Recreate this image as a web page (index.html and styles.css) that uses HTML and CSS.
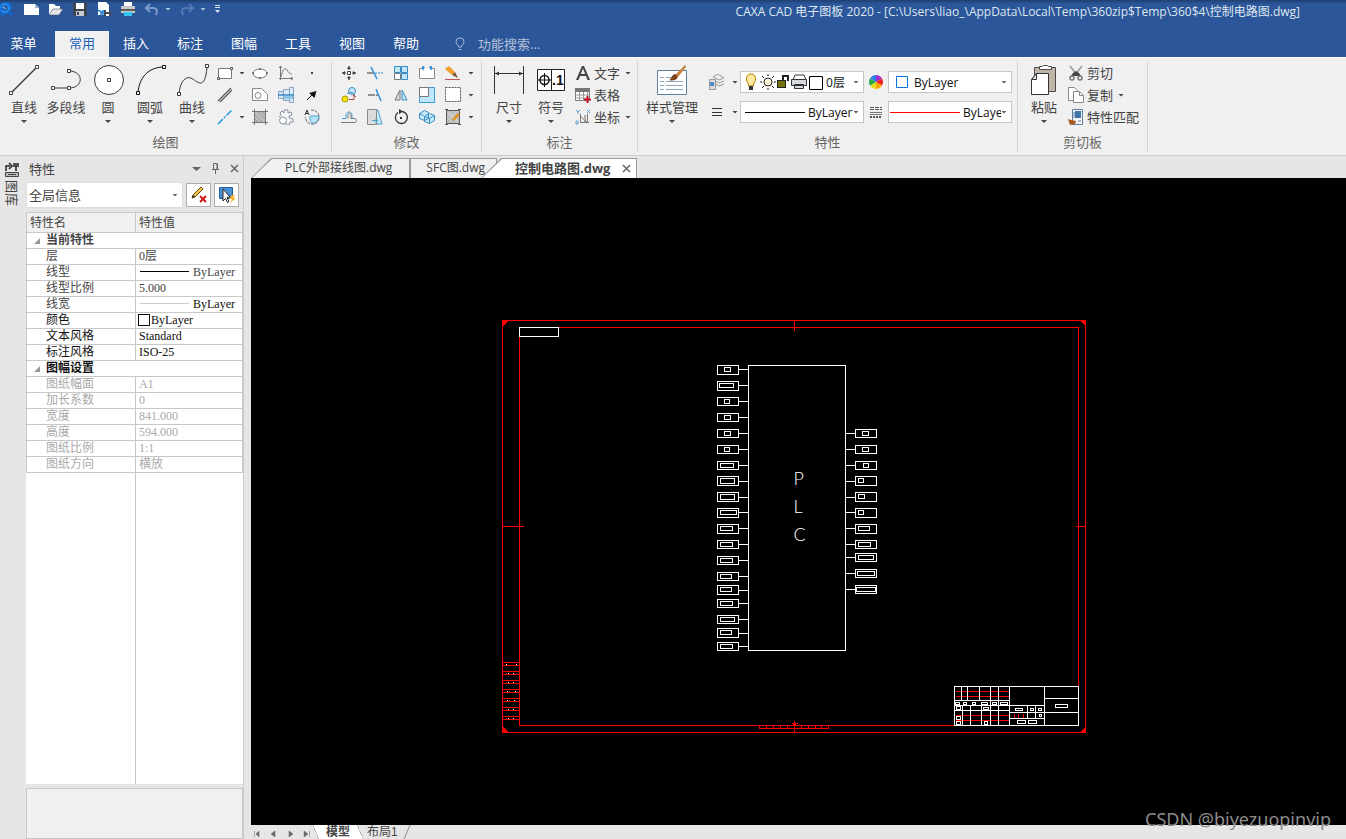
FILE: index.html
```html
<!DOCTYPE html>
<html lang="zh-CN">
<head>
    <meta charset="UTF-8">
    <meta name="viewport" content="width=device-width, initial-scale=1.0">
    <title>CAXA CAD 电子图板 2020</title>
    <link rel="stylesheet" href="styles.css">
</head>
<body>
    <header class="header">
        <div class="titlebar">
            <div class="quick">
                <svg class="logo" width="14" height="18" viewBox="0 0 14 18"><circle cx="5" cy="8" r="4" fill="none" stroke="#1e8bf0" stroke-width="2.500"/><path d="M-2 4l4 2M1 13l-3 2M8 11l4 4M7 3l4 2M-1 9h4M2 15l3-2M10 8h2" stroke="#0d6ee0" stroke-width="2" fill="none"/><path d="M3 7l3 2" stroke="#9fd4ff"/></svg>
                <button title="新建"><svg width="16" height="16" viewBox="0 0 16 16"><path d="M0 3h11l4 4v7H0z" fill="#fff"/><path d="M11 3v4h4z" fill="#9fb0c8"/></svg></button>
                <button title="打开"><svg width="16" height="16" viewBox="0 0 16 16"><path d="M1 3h5l2 2h4v3H5l-4 6z" fill="#fff"/><path d="M5 8h10l-4 6H1z" fill="#e6e6e6" stroke="#4a5c7a" stroke-width=".6"/></svg></button>
                <button title="保存"><svg width="16" height="16" viewBox="0 0 16 16"><path d="M1 2h14v13H3l-2-2z" fill="#3d4450"/><path d="M4 2h8v6H4z" fill="#fff"/><path d="M4 10h8v5H4z" fill="#c8ccd2"/><path d="M5 11h2v3H5z" fill="#3d4450"/></svg></button>
                <button title="另存为"><svg width="16" height="16" viewBox="0 0 16 16"><path d="M2 1h8l3 3v10H2z" fill="#fff"/><path d="M2 9l5 3M7 9v4H4" stroke="#1f7fd6" stroke-width="1.500" fill="none"/><path d="M8 9h7v6H8z" fill="#444b57"/><path d="M10 9h3v2h-3zM10 13h3v2h-3z" fill="#fff"/></svg></button>
                <button title="打印"><svg width="16" height="16" viewBox="0 0 16 16"><path d="M4 1h8v4H4z" fill="#fff"/><path d="M1 5h14v7H1z" fill="#c8c8c8"/><path d="M1 8h14v2H1z" fill="#5b5b5b"/><path d="M4 11h8v4H4z" fill="#33c5f0"/></svg></button>
                <button title="撤销"><svg width="16" height="16" viewBox="0 0 16 16"><path d="M2 7h7c4 0 5 3 3 7M6 3L2 7l4 4" stroke="#7f9cc8" stroke-width="2" fill="none"/></svg></button>
                <i class="caret pale"></i>
                <button title="恢复"><svg width="16" height="16" viewBox="0 0 16 16"><path d="M14 7H7c-4 0-5 3-3 7M10 3l4 4-4 4" stroke="#5478b4" stroke-width="2" fill="none"/></svg></button>
                <i class="caret pale"></i>
                <button title="自定义" class="more"><svg width="7" height="8" viewBox="0 0 7 8"><path d="M1 .5h5M1 2.500h5" stroke="#dde5f2"/><path d="M1 5h5L3.500 8z" fill="#dde5f2"/></svg></button>
            </div>
            <h1 class="title">CAXA CAD 电子图板 2020 - [C:\Users\liao_\AppData\Local\Temp\360zip$Temp\360$4\控制电路图.dwg]</h1>
        </div>
        <nav class="menu">
            <a href="#" class="first">菜单</a>
            <a href="#" class="active">常用</a>
            <a href="#">插入</a>
            <a href="#">标注</a>
            <a href="#">图幅</a>
            <a href="#">工具</a>
            <a href="#">视图</a>
            <a href="#">帮助</a>
            <label class="search">
                <svg width="12" height="14" viewBox="0 0 12 14"><path d="M4.500 10V9C3 7.500 2 6.500 2 4.800a4 4 0 018 0C10 6.500 9 7.500 7.500 9v1zM4.500 12.500h3" fill="none" stroke="#a9b9d5"/></svg>
                <input type="text" placeholder="功能搜索..." aria-label="功能搜索">
            </label>
        </nav>
    </header>

    <div class="ribbon">
        <section class="group draw">
            <div class="tools">
                <button class="big"><svg width="38" height="36" viewBox="0 0 38 36"><path d="M6 30L32 4" stroke="#3a3a42" stroke-width="1.500"/><g fill="#fff" stroke="#3a3a42"><path d="M4.500 28.500h3v3h-3zM30.500 2.500h3v3h-3z"/></g></svg><span>直线</span><i class="caret"></i></button>
                <button class="big"><svg width="38" height="36" viewBox="0 0 38 36"><path d="M6 25h16c15 0 15-17 0-17" stroke="#3a3a42" fill="none"/><g fill="#fff" stroke="#3a3a42"><path d="M4.500 23.500h3v3h-3zM20.500 23.500h3v3h-3zM20.500 6.500h3v3h-3z"/></g></svg><span>多段线</span></button>
                <button class="big"><svg width="38" height="36" viewBox="0 0 38 36"><circle cx="20" cy="17" r="14.500" fill="#fff" stroke="#3a3a42"/><path d="M18.500 15.500h3v3h-3z" fill="#fff" stroke="#3a3a42"/></svg><span>圆</span><i class="caret"></i></button>
                <button class="big"><svg width="38" height="36" viewBox="0 0 38 36"><path d="M7 30C8 15 17 4 33 4" stroke="#111" fill="none"/><g fill="#fff" stroke="#111"><path d="M5.500 28.500h3v3h-3zM31.500 2.500h3v3h-3z"/></g></svg><span>圆弧</span><i class="caret"></i></button>
                <button class="big"><svg width="38" height="36" viewBox="0 0 38 36"><path d="M6 31c1-12 6-18 12-16 6 3 14 14 16-11" stroke="#3a3a42" fill="none"/><g fill="#fff" stroke="#3a3a42"><path d="M4.500 29.500h3v3h-3zM32.500 1.500h3v3h-3z"/></g></svg><span>曲线</span><i class="caret"></i></button>
                <div class="grid">
                    <button title="矩形"><svg width="18" height="16" viewBox="0 0 18 16"><path d="M2.500 3.500h13v10h-13z" fill="#fff" stroke="#777"/><path d="M14.500 2.500h2v2h-2zM1.500 12.500h2v2h-2z" fill="#fff" stroke="#555"/></svg></button><i class="caret"></i>
                    <button title="椭圆"><svg width="16" height="16" viewBox="0 0 16 16"><ellipse cx="8" cy="8.500" rx="7" ry="4.500" fill="#fff" stroke="#777"/><path d="M7 3h2v2H7zM0 7h2v2H0zM14 7h2v2h-2zM7 12h2v2H7z" fill="#777"/></svg></button>
                    <button title="公式曲线"><svg width="16" height="16" viewBox="0 0 16 16"><path d="M2.500 1v14M1 13.500h14M1 3l1.500-2L4 3M13 12l2 1.500-2 1.500M3 12C5 2 8 3 9 5s3 4 5 4" fill="none" stroke="#777"/></svg></button>
                    <button title="点"><svg width="16" height="16" viewBox="0 0 16 16"><path d="M7 7h2v2H7z" fill="#444"/></svg></button>
                    <button title="平行线"><svg width="16" height="16" viewBox="0 0 16 16"><path d="M1 14L14 1M3 15L15 3" stroke="#555" stroke-width="1.200"/></svg></button><i></i>
                    <button title="多边形"><svg width="16" height="16" viewBox="0 0 16 16"><path d="M.5 1.500h9l6 6v6H.5z" fill="#fff" stroke="#888"/><circle cx="6" cy="8.500" r="3" fill="#fff" stroke="#888"/></svg></button>
                    <button title="轴"><svg width="16" height="16" viewBox="0 0 16 16"><path d="M.5 4.500h5v7h-5z" fill="#d5e6f5" stroke="#8aa2bc"/><path d="M5.500 2.500h6v11h-6zM11.500.5h4v15h-4z" fill="#d9eafa" stroke="#8aa2bc"/><path d="M0 8h16" stroke="#3a8cc8" stroke-width="1.500"/><path d="M6 10.500h9" stroke="#8fc6ee" stroke-width="3"/></svg></button>
                    <button title="箭头"><svg width="16" height="16" viewBox="0 0 16 16"><path d="M3 13l5-5" stroke="#111"/><path d="M12.500 4l-2 7L5 6z" fill="#111"/></svg></button>
                    <button title="中心线"><svg width="16" height="16" viewBox="0 0 16 16"><path d="M1 15L15 1" stroke="#1e9be0" stroke-width="1.500" stroke-dasharray="7 1.500 2 1.500"/></svg></button><i class="caret"></i>
                    <button title="剖面线"><svg width="16" height="16" viewBox="0 0 16 16"><path d="M2.500 2.500h11v11h-11z" fill="#bdbdbd"/><path d="M2.500 0v16M13.500 0v16M0 2.500h16M0 13.500h16" stroke="#777"/><path d="M3 6l7 7M3 10l3 3M6 3l7 7M10 3l3 3" stroke="#999"/></svg></button>
                    <button title="齿轮"><svg width="16" height="16" viewBox="0 0 16 16"><path d="M2 4l2-2 2 2V1h4v3l3-1 1 3-3 1v2l4 1v3h-3l-1 3H8v-2M2 4l1 2-2 2" fill="#f4f6f9" stroke="#8792a0"/><circle cx="5" cy="11.500" r="3.500" fill="#fff" stroke="#8792a0"/></svg></button>
                    <button title="局部放大"><svg width="16" height="16" viewBox="0 0 16 16"><path d="M6 7h9c0 8-9 10-9 3z" fill="#b8e2f8" stroke="#4aa3d6"/><path d="M7 1c4 0 7 2 8 6M15 9c-1 6-7 8-12 4L1 8" fill="none" stroke="#666" stroke-dasharray="3 1"/><path d="M1 6l2-5 2 5M2 4.500h2" fill="none" stroke="#333"/></svg></button>
                </div>
            </div>
            <h2>绘图</h2>
        </section>

        <section class="group modify">
            <div class="tools">
                <div class="grid">
                    <button title="平移"><svg width="16" height="16" viewBox="0 0 16 16"><path d="M8 1v4M8 11v4M1 8h4M11 8h4" stroke="#444"/><path d="M6 4l2-3 2 3zM6 12l2 3 2-3zM4 6L1 8l3 2zM12 6l3 2-3 2z" fill="#444"/><path d="M6.500 6.500h3v3h-3z" fill="#fff" stroke="#444"/></svg></button>
                    <button title="裁剪"><svg width="16" height="16" viewBox="0 0 16 16"><path d="M0 8h7" stroke="#333"/><path d="M8 8h8" stroke="#2f8fd8" stroke-dasharray="2 1"/><path d="M4 2l6 12" stroke="#2f8fd8" stroke-width="1.500"/></svg></button>
                    <button title="阵列"><svg width="16" height="16" viewBox="0 0 16 16"><path d="M1.500 1.500h6v6h-6zM8.500 1.500h6v6h-6zM8.500 8.500h6v6h-6z" fill="#bfe6f9" stroke="#3a8cc0"/><path d="M1.500 8.500h6v6h-6z" fill="#fff" stroke="#777"/></svg></button>
                    <button title="过渡"><svg width="18" height="16" viewBox="0 0 18 16"><path d="M1.500 3.500h15v10h-15z" fill="#fff" stroke="#888"/><path d="M6 3.500h6" stroke="#f0f0f0"/><path d="M4 3l2.500-1M14 3l-2.500-1M5 1v4M13 1v4" stroke="#2f8fd8" stroke-width="1.500"/></svg></button>
                    <button title="删除"><svg width="16" height="16" viewBox="0 0 16 16"><path d="M0 4l4-3 6 6-3 3z" fill="#f0a02c"/><path d="M7 10l3-3 3 6z" fill="#7d5230"/><path d="M0 14.500h15" stroke="#b55"/></svg></button><i class="caret"></i>
                    <button title="平移复制"><svg width="16" height="16" viewBox="0 0 16 16"><circle cx="4" cy="12" r="3" fill="#f7e600" stroke="#a89a00"/><circle cx="11" cy="4" r="3.500" fill="#c6e9fb" stroke="#3a8cc0"/><path d="M6 7l3-2 5 2" stroke="#3a8cc0" fill="none"/><path d="M8 12.500h5V9M12 9l1-1 2 2" stroke="#b04040" fill="none"/></svg></button>
                    <button title="延伸"><svg width="16" height="16" viewBox="0 0 16 16"><path d="M1 8h5" stroke="#333"/><path d="M6 8h6" stroke="#333" stroke-dasharray="2 1"/><path d="M9 2l5 12" stroke="#2f8fd8" stroke-width="1.500"/></svg></button>
                    <button title="镜像"><svg width="16" height="16" viewBox="0 0 16 16"><path d="M7 3v10H2z" fill="#ddd" stroke="#777"/><path d="M9 3v10h5z" fill="#bfe6f9" stroke="#3a8cc0"/></svg></button>
                    <button title="缩放"><svg width="16" height="16" viewBox="0 0 16 16"><path d="M.5.5h15v15H.5z" fill="#bfe6f9" stroke="#3a9ad0"/><path d="M.5.5h9v9h-9z" fill="#fff" stroke="#777"/></svg></button>
                    <button title="分解"><svg width="16" height="16" viewBox="0 0 16 16"><path d="M.5.5h15v14H.5z" fill="#fff" stroke="#555" stroke-dasharray="2 1"/></svg></button><i class="caret"></i>
                    <button title="等距线"><svg width="16" height="16" viewBox="0 0 16 16"><path d="M1 9.500h4V6c0-4 6-4 6 0v3.500" fill="none" stroke="#4a9ad0"/><path d="M0 13.500h14c2 0 2-4 0-4h-4V6c0-2-3-2-3 0v3.500" fill="none" stroke="#777"/></svg></button>
                    <button title="拉伸"><svg width="16" height="16" viewBox="0 0 16 16"><path d="M9 1h2l4 14H9z" fill="#c6ecfb" stroke="#4aa3d6"/><path d="M.5.5h9v15h-9z" fill="#dcdcdc" stroke="#888"/><path d="M5 11.500h5M8 9.500l3 2-3 2" stroke="#4aa3d6" fill="none"/></svg></button>
                    <button title="旋转"><svg width="16" height="16" viewBox="0 0 16 16"><path d="M9 2.500a6 6 0 11-4 1" fill="none" stroke="#333" stroke-width="1.300"/><path d="M6 0l4 2.500L6 5z" fill="#333"/><path d="M7 8h2v2H7z" fill="#333"/></svg></button>
                    <button title="块创建"><svg width="16" height="16" viewBox="0 0 16 16"><path d="M.5 4.500l5-3 4 2v6l-4 2-5-2zM5.500 7.500l5-3 5 2v5l-5 3-5-2z" fill="#c6e9fb" stroke="#3a8cc0"/><path d="M5.500 7.500l5 2 5-3M10.500 9.500v5M.5 4.500l4 2" fill="none" stroke="#3a8cc0"/></svg></button>
                    <button title="编辑填充"><svg width="16" height="16" viewBox="0 0 16 16"><path d="M1.500 1.500h13v13h-13z" fill="#c9c9c9" stroke="#555"/><path d="M2 6l8 8M2 10l4 4M6 2l8 8M10 2l4 4" stroke="#aaa"/><path d="M0 .5h3M13 .5h3M0 15.500h3M13 15.500h3" stroke="#555"/><path d="M8 11l6-6" stroke="#e0951c" stroke-width="2.500"/></svg></button><i class="caret"></i>
                </div>
            </div>
            <h2>修改</h2>
        </section>

        <section class="group dimension">
            <div class="tools">
                <button class="big"><svg width="38" height="36" viewBox="0 0 38 36"><path d="M4.500 3v28M33.500 3v28M5 10.500h28" stroke="#333" fill="none"/><path d="M5 10.500l4-2v4zM33 10.500l-4-2v4z" fill="#333"/></svg><span>尺寸</span><i class="caret"></i></button>
                <button class="big"><svg width="38" height="36" viewBox="0 0 38 36"><path d="M5.500 6.500h27v21h-27zM19.500 6v22" fill="#fff" stroke="#222"/><circle cx="12.500" cy="17" r="4.500" fill="none" stroke="#111" stroke-width="1.500"/><path d="M12.500 10v14M6 17h13" stroke="#111"/><text class="icon-text" x="20" y="22">.1</text></svg><span>符号</span><i class="caret"></i></button>
                <div class="list">
                    <button><svg width="16" height="16" viewBox="0 0 16 16"><path d="M1 15L7 1h2l6 14h-2.500L11 11H5l-1.500 4zM5.800 9h4.400L8 3.500z" fill="#444"/></svg>文字<i class="caret"></i></button>
                    <button><svg width="16" height="16" viewBox="0 0 16 16"><path d="M.5 1.500h14v12H.5z" fill="#fff" stroke="#777"/><path d="M0 1h15v4H0z" fill="#777"/><path d="M4.500 5v9M8.500 5v9M12.500 5v5M0 8h15M0 11h15" stroke="#999"/><path d="M12.500 9v7M9 12.500h7" stroke="#c4122f" stroke-width="2"/></svg>表格</button>
                    <button><svg width="16" height="16" viewBox="0 0 16 16"><path d="M5.500 5v9M5 13.500h9M5 8c4 0 2 3 7 5M10 6v7M12.500 5v9" fill="none" stroke="#777"/><path d="M1 1l2 2 2-2M3 3v2M12 1l3 3M15 1l-3 3M1 12h2v3H1z" fill="none" stroke="#5f9fd0"/></svg>坐标<i class="caret"></i></button>
                </div>
            </div>
            <h2>标注</h2>
        </section>

        <section class="group props">
            <div class="tools">
                <button class="big wide"><svg width="38" height="36" viewBox="0 0 38 36"><path d="M4.500 7.500h29v24h-29z" fill="#fff" stroke="#5f7f9f"/><path d="M7 14.500h4M7 18.500h4M7 22.500h4M7 26.500h4M13 14.500h6M13 18.500h17M13 22.500h17M13 26.500h17" stroke="#8fa6bf"/><path d="M16 17c3-1 2-6 7-6l2 3c-2 4-6 4-9 3z" fill="#7a4518"/><path d="M23 11l9-9 1 2-8 10z" fill="#c8843a"/></svg><span>样式管理</span><i class="caret"></i></button>
                <div class="style-grid">
                    <button title="图层"><svg width="16" height="16" viewBox="0 0 16 16"><path d="M4 3l5-3 6 4-5 2zM4 6l6 3 5-2M4 9l6 3 5-2" fill="#eee" stroke="#999"/><path d="M.5 5.500h6v10h-6z" fill="#ddd" stroke="#999"/><path d="M1 8h4v4H1z" fill="#4b8cc4"/></svg></button><i class="caret"></i>
                    <div class="combo layer">
                        <svg width="80" height="18" viewBox="0 0 80 18"><path d="M3.500 11C0 7 1 1 6 1s6 6 2.500 10v2h-5z" fill="#ffe9a0" stroke="#b08000"/><path d="M4 13h4v4H4z" fill="#333"/><circle cx="23" cy="9" r="4" fill="#fff7dc" stroke="#222"/><path d="M23 1v2M23 15v2M15 9h2M29 9h2M17 3l2 2M29 3l-2 2M17 15l2-2M29 15l-2-2" stroke="#222"/><path d="M32 7h9v8h-9z" fill="#222"/><path d="M33 9h7M33 11h7M33 13h7" stroke="#c8c000"/><path d="M38 7V3h5v5" fill="none" stroke="#222" stroke-width="2"/><path d="M50 2h9l2 5H48z" fill="#fff" stroke="#333"/><path d="M46.500 6.500h15v6h-15zM49.500 11.500h9v4h-9z" fill="#d5d8dc" stroke="#333"/><path d="M64.500 3.500h13v13h-13z" fill="#fff" stroke="#000"/></svg>
                        <select aria-label="图层"><option>0层</option></select>
                    </div>
                    <svg class="wheel" width="14" height="14" viewBox="0 0 14 14"><path d="M7 7V0a7 7 0 016 3.500z" fill="#a02ed0"/><path d="M7 7l6-3.500a7 7 0 010 7z" fill="#f02020"/><path d="M7 7l6 3.500A7 7 0 017 14z" fill="#ffa500"/><path d="M7 7v7a7 7 0 01-6-3.500z" fill="#e6de20"/><path d="M7 7l-6 3.500a7 7 0 010-7z" fill="#2aa844"/><path d="M7 7L1 3.500A7 7 0 017 0z" fill="#2c7fe8"/></svg>
                    <div class="combo color">
                        <svg width="13" height="13" viewBox="0 0 13 13"><path d="M.5.5h11v11H.5z" fill="#fff" stroke="#0a74d6"/></svg>
                        <select aria-label="颜色"><option>ByLayer</option></select>
                    </div>
                    <button title="线型"><svg width="16" height="16" viewBox="0 0 16 16"><path d="M3 4.500h10M3 8.500h10M3 11.500h10" stroke="#333"/></svg></button><i class="caret"></i>
                    <div class="combo line">
                        <i class="sample"></i>
                        <select aria-label="线型"><option>ByLayer</option></select>
                    </div>
                    <svg class="wheel" width="14" height="14" viewBox="0 0 14 14"><path d="M1 2.500h12M1 4.500h12" stroke="#555" stroke-dasharray="4 1"/><path d="M1 7.500h12M1 9.500h12" stroke="#777"/><path d="M1 12h12" stroke="#555" stroke-width="2" stroke-dasharray="2 1"/></svg>
                    <div class="combo weight">
                        <i class="sample bright"></i>
                        <select aria-label="线宽"><option>ByLayer</option></select>
                    </div>
                </div>
            </div>
            <h2>特性</h2>
        </section>

        <section class="group clip">
            <div class="tools">
                <button class="big"><svg width="38" height="36" viewBox="0 0 38 36"><path d="M9.500 4.500h21v24h-21z" fill="#bfb6aa" stroke="#4a4a4a"/><path d="M14.500 6.500v-3h3l1-1h4l1 1h3v3z" fill="#fff" stroke="#4a4a4a"/><path d="M11.500 10.500h12v21h-17v-15z" fill="#fff" stroke="#333"/><path d="M11.500 10.500v6h-5z" fill="#eee" stroke="#333"/></svg><span>粘贴</span><i class="caret"></i></button>
                <div class="list">
                    <button><svg width="16" height="16" viewBox="0 0 16 16"><path d="M2 1l7 9M14 1l-7 9" stroke="#999" stroke-width="1.500"/><path d="M5 8l3-2 3 2 2 3H3z" fill="#444"/><circle cx="4" cy="13" r="2" fill="none" stroke="#777" stroke-width="1.500"/><circle cx="12" cy="13" r="2" fill="none" stroke="#777" stroke-width="1.500"/></svg>剪切</button>
                    <button><svg width="16" height="16" viewBox="0 0 16 16"><path d="M.5.5h6l3 3v10h-9z" fill="#fff" stroke="#888"/><path d="M5.500 4.500h6l4 4v7h-10z" fill="#fff" stroke="#888"/><path d="M11.500 4.500v4h4" fill="none" stroke="#888"/></svg>复制<i class="caret"></i></button>
                    <button><svg width="16" height="16" viewBox="0 0 16 16"><path d="M4.500.5h10v15h-10z" fill="#f4f4f4" stroke="#5f7f9f"/><path d="M7 2h6v7H7z" fill="#3f74a8"/><path d="M6 3v6M10 12h3" stroke="#5f7f9f"/><path d="M0 10l3 1 5 1-1 3-5 1z" fill="#a85a1c"/></svg>特性匹配</button>
                </div>
            </div>
            <h2>剪切板</h2>
        </section>
    </div>

    <div class="workspace">
        <aside class="dock">
            <button>
                <svg width="14" height="16" viewBox="0 0 14 16"><path d="M1 9V4h4M4 1l3 3-3 3M8 2h6M8 4h6M11 4v5" fill="none" stroke="#222" stroke-width="1.500"/><path d="M.5 10.500h13v4H.5zM3 12.500h8" fill="#bbb" stroke="#444"/></svg>
                <span>图库</span>
            </button>
        </aside>

        <aside class="panel">
            <div class="panel-title">
                <span>特性</span>
                <svg width="9" height="14" viewBox="0 0 9 14"><path d="M0 6h9l-4.500 4z" fill="#666"/></svg>
                <svg width="9" height="14" viewBox="0 0 9 14"><path d="M2.500 8V2.500h4V8M6 3v5M1 8.500h7M4.500 9v4" fill="none" stroke="#666"/></svg>
                <svg width="9" height="14" viewBox="0 0 9 14"><path d="M1 4l7 7M8 4l-7 7" stroke="#666" stroke-width="1.500"/></svg>
            </div>
            <div class="panel-bar">
                <div class="combo"><select aria-label="选择"><option>全局信息</option></select></div>
                <button title="清除"><svg width="18" height="18" viewBox="0 0 18 18"><path d="M2 12l1-3 8-8 2 2-8 8z" fill="#f4c44e" stroke="#6b4a10"/><path d="M2 12l1-3 2 2z" fill="#222"/><path d="M10 10l6 6M16 10l-6 6" stroke="#d01818" stroke-width="2"/></svg></button>
                <button title="拾取"><svg width="18" height="18" viewBox="0 0 18 18"><path d="M1.500 1.500h13v11h-13z" fill="#4a90d4" stroke="#1d5fa0"/><path d="M5 3l7 8-3 .5 2 4-1.500 1-2-4L5 15z" fill="#fff" stroke="#222"/><path d="M14 9l-3 4h3l-2 4 6-5h-3l2-3z" fill="#f5b025"/></svg></button>
            </div>
            <table class="props-table">
                <thead>
                    <tr><th class="name">特性名</th><th>特性值</th></tr>
                </thead>
                <tbody>
                    <tr class="section gray"><td colspan="2">当前特性</td></tr>
                    <tr><td>层</td><td>0层</td></tr>
                    <tr><td>线型</td><td class="sampled"><i></i>ByLayer</td></tr>
                    <tr><td>线型比例</td><td>5.000</td></tr>
                    <tr><td>线宽</td><td class="sampled thin"><i></i>ByLayer</td></tr>
                    <tr class="black"><td>颜色</td><td class="swatch"><i></i>ByLayer</td></tr>
                    <tr class="black"><td>文本风格</td><td>Standard</td></tr>
                    <tr class="black"><td>标注风格</td><td>ISO-25</td></tr>
                    <tr class="section"><td colspan="2">图幅设置</td></tr>
                    <tr class="off"><td>图纸幅面</td><td>A1</td></tr>
                    <tr class="off"><td>加长系数</td><td>0</td></tr>
                    <tr class="off"><td>宽度</td><td>841.000</td></tr>
                    <tr class="off"><td>高度</td><td>594.000</td></tr>
                    <tr class="off"><td>图纸比例</td><td>1:1</td></tr>
                    <tr class="off"><td>图纸方向</td><td>横放</td></tr>
                </tbody>
            </table>
            <div class="filler"></div>
            <div class="hint"></div>
        </aside>

        <main class="document">
            <div class="doc-tabs">
                <a href="#" class="plc">PLC外部接线图.dwg</a>
                <a href="#" class="sfc">SFC图.dwg</a>
                <a href="#" class="current">控制电路图.dwg
                    <svg width="9" height="9" viewBox="0 0 9 9"><path d="M1 1l7 7M8 1L1 8" stroke="#666" stroke-width="1.500"/></svg>
                </a>
            </div>
            <div class="canvas">
                <svg class="drawing" width="100%" height="100%">
                    <g transform="translate(-250.500 -177.500)">
                        <!-- sheet frame -->
                        <g class="red">
                            <path d="M502 320h583v412h-583zM519 327h559v398h-559z"/>
                            <path d="M794 320v10M794 720v12M502 526h21M1075 526h10"/>
                            <path d="M502 662h17M502 665h17M502 671h17M502 674h17M502 680h17M502 683h17M502 689h17M502 692h17M502 698h17M502 701h17M502 707h17M502 710h17M502 716h17M502 719h17"/>
                            <path d="M759 725v3h69v-3M766 725v3M773 725v3M780 725v3M787 725v3M801 725v3M808 725v3M815 725v3M821 725v3M791 723h6M792 725l2-2 2 2"/>
                        </g>
                        <path class="corner" d="M502 320h6l-6 6zM1085 320v6l-6-6zM1085 732h-6l6-6zM502 732v-6l6 6z"/>
                        <path class="white" d="M506 663v1M516 663v1M508 672v1M513 672v1M508 681v1M513 681v1M507 690v1M515 690v1M507 699v1M514 699v1M508 708v1M513 708v1M508 717v1M513 717v1M519 327h39v9h-39z"/>

                        <!-- controller body -->
                        <path class="white" d="M748 365h97v285h-97z"/>
                        <text class="cad-text" x="793" y="484">P</text>
                        <text class="cad-text" x="793" y="512">L</text>
                        <text class="cad-text" x="793" y="540">C</text>

                        <!-- left pins -->
                        <g class="white">
                            <path d="M717 365h21v9h-21zM724 367h6v4h-6zM738 369h10"/>
                            <path d="M717 381h21v9h-21zM719 383h14v4h-14zM738 385h10"/>
                            <path d="M717 397h21v8h-21zM724 399h5v4h-5zM738 401h10"/>
                            <path d="M717 413h21v8h-21zM724 415h6v4h-6zM738 417h10"/>
                            <path d="M717 429h21v8h-21zM724 431h6v4h-6zM738 433h10"/>
                            <path d="M717 445h21v8h-21zM724 447h5v4h-5zM738 449h10"/>
                            <path d="M717 461h21v8h-21zM720 463h13v4h-13zM738 465h10"/>
                            <path d="M717 476h21v9h-21zM720 478h14v5h-14zM738 481h10"/>
                            <path d="M717 492h21v9h-21zM720 494h14v5h-14zM738 497h10"/>
                            <path d="M717 508h21v9h-21zM720 510h16v4h-16zM738 512h10"/>
                            <path d="M717 524h21v9h-21zM720 526h12v4h-12zM738 528h10"/>
                            <path d="M717 540h21v8h-21zM720 542h12v4h-12zM738 544h10"/>
                            <path d="M717 556h21v8h-21zM720 558h12v4h-12zM738 560h10"/>
                            <path d="M717 572h21v8h-21zM720 574h11v4h-11zM738 576h10"/>
                            <path d="M717 585h21v9h-21zM720 587h11v4h-11zM738 590h10"/>
                            <path d="M717 599h21v8h-21zM720 601h12v4h-12zM738 603h10"/>
                            <path d="M717 615h21v8h-21zM720 617h14v4h-14zM738 619h10"/>
                            <path d="M717 628h21v9h-21zM720 630h11v4h-11zM738 633h10"/>
                            <path d="M717 642h21v8h-21zM720 644h12v4h-12zM738 646h10"/>
                        </g>

                        <!-- right pins -->
                        <g class="white">
                            <path d="M855 429h21v8h-21zM862 431h6v4h-6zM845 433h10"/>
                            <path d="M855 445h21v8h-21zM862 447h6v4h-6zM845 449h10"/>
                            <path d="M855 461h21v8h-21zM863 463h5v4h-5zM845 465h10"/>
                            <path d="M855 476h21v9h-21zM858 478h5v4h-5zM845 481h10"/>
                            <path d="M855 492h21v9h-21zM858 494h6v4h-6zM845 497h10"/>
                            <path d="M855 508h21v9h-21zM858 510h5v4h-5zM845 512h10"/>
                            <path d="M855 524h21v9h-21zM858 526h11v4h-11zM845 528h10"/>
                            <path d="M855 540h21v8h-21zM858 542h12v4h-12zM845 544h10"/>
                            <path d="M855 553h21v8h-21zM858 555h15v4h-15zM845 557h10"/>
                            <path d="M855 569h21v8h-21zM857 571h17v4h-17zM845 573h10"/>
                            <path d="M855 585h21v8h-21zM856 587h19v4h-19zM845 589h10"/>
                        </g>

                        <!-- title block -->
                        <path class="red" d="M955 691h54M955 696h54M955 715h54M955 720h54M1014 713v4M1018 713v4M1023 713v4"/>
                        <g class="white">
                            <path d="M954 686h124v39h-124zM1009 686v39M1044 686v39M961 686v14M967 686v14M979 686v14M990 686v39M998 686v39"/>
                            <path d="M962 705v20M970 705v20M981 705v20M954 700h55M954 705h90M954 710h55M1044 698h34M1009 712h69M1009 718h35M1027 705v13M1035 705v13"/>
                            <path d="M955 702h4v2h-4zM963 702h3v2h-3zM972 702h3v2h-3zM981 702h6v2h-6zM992 702h4v2h-4zM1000 702h7v2h-7z"/>
                            <path d="M956 706h4v3h-4zM983 707h5v2h-5zM956 716h4v3h-4zM956 721h4v3h-4zM984 721h3v3h-3z"/>
                            <path d="M1015 708h7v2h-7zM1030 708h3v2h-3zM1038 708h3v2h-3zM1039 714h2v2h-2zM1017 720h8v3h-8zM1028 720h8v3h-8zM1055 704h12v3h-12z"/>
                        </g>
                    </g>
                </svg>
            </div>
            <div class="sheet-tabs">
                <svg width="62" height="14" viewBox="0 0 62 14"><path d="M3.500 6v6M8 6v6L5 9zM24 6v6l-4-3zM38 6v6l4-3zM53 6v6l4-3zM58.500 6v6" fill="#666" stroke="#666" stroke-width=".5"/></svg>
                <a href="#" class="model">模型</a>
                <a href="#" class="layout">布局1</a>
                <svg width="14" height="14" viewBox="0 0 14 14"><path d="M12 0L6 14" stroke="#888"/></svg>
            </div>
            <p class="watermark">CSDN @biyezuopinvip</p>
        </main>
    </div>
</body>
</html>
```
FILE: styles.css
```css
* {
    box-sizing: border-box;
}
body {
    display: flex;
    flex-direction: column;
    height: 100vh;
    margin: 0;
    overflow: hidden;
    font-family: "Open Sans", "Noto Sans CJK SC", sans-serif;
    font-size: 13px;
    color: #444;
    background-color: #e6e6e6;
}
h1, h2, p {
    margin: 0;
    font-size: 13px;
    font-weight: normal;
}
a {
    color: inherit;
    text-decoration: none;
}
svg {
    display: block;
    flex: none;
}
button {
    display: flex;
    align-items: center;
    justify-content: center;
    margin: 0;
    padding: 0;
    border: none;
    background: none;
    color: inherit;
    font: inherit;
    white-space: nowrap;
}
select, input {
    min-width: 0;
    padding: 0;
    border: none;
    outline: none;
    background: transparent;
    font: inherit;
    color: inherit;
    appearance: none;
}
.caret {
    flex: none;
    width: 6px;
    height: 3px;
    background-color: #444;
    clip-path: polygon(0 0, 100% 0, 50% 100%);
}
.caret.pale {
    background-color: #b5c4de;
}

/* title bar and menu */
.header {
    background: linear-gradient(#1f3f70, #2b579a 4px);
    color: #fff;
}
.titlebar {
    display: flex;
    justify-content: space-between;
    height: 31px;
}
.quick {
    display: flex;
    align-items: center;
    gap: 8px;
    height: 18px;
}
.quick .logo {
    margin-right: 2px;
}
.quick .caret {
    margin-left: -3px;
}
.title {
    padding-right: 46px;
    color: #dfe6f1;
    font-size: 12px;
    line-height: 24px;
    white-space: nowrap;
}
.menu {
    display: flex;
    height: 26px;
    line-height: 24px;
}
.menu a {
    width: 54px;
    text-align: center;
}
.menu .first {
    width: 55px;
    padding-right: 8px;
}
.menu .active {
    background-color: #f0f0f0;
    color: #1a62b8;
}
.search {
    display: flex;
    align-items: center;
    gap: 12px;
    margin-left: 21px;
}
.search input {
    width: 100px;
}
.search input::placeholder {
    color: #b5c0d4;
}

/* ribbon */
.ribbon {
    display: flex;
    flex: none;
    height: 99px;
    padding: 3px 0;
    border-top: 1px solid #fff;
    border-bottom: 1px solid #cfcfcf;
    background-color: #f0f0f0;
}
.group {
    display: flex;
    flex-direction: column;
    border-right: 1px solid #d4d4d4;
}
.group h2 {
    color: #666;
    line-height: 20px;
    text-align: center;
}
.tools {
    display: flex;
    height: 72px;
}
.draw .tools {
    padding: 0 6px 0 3px;
}
.modify .tools {
    padding: 0 5px 0 4px;
}
.dimension .tools {
    padding: 0 6px;
}
.props .tools {
    padding: 0 5px 0 8px;
}
.clip .tools {
    padding: 0 8px 0 5px;
}
.big {
    flex-direction: column;
    justify-content: flex-start;
    width: 42px;
    padding-top: 2px;
    line-height: 16px;
}
.big .caret {
    margin-top: 5px;
}
.big.wide {
    width: 52px;
}
.grid {
    display: grid;
    grid-template-rows: repeat(3, 22px);
    align-items: center;
    justify-items: center;
    padding-top: 1px;
}
.draw .grid {
    grid-template-columns: 24px 10px 26px 26px 26px;
}
.modify .grid {
    grid-template-columns: repeat(5, 26px) 10px;
}
.list {
    display: flex;
    flex-direction: column;
    padding: 1px 0 0 3px;
}
.list button {
    justify-content: flex-start;
    gap: 3px;
    height: 22px;
    line-height: 18px;
}
.list .caret {
    margin-left: 2px;
}
.icon-text {
    font: bold 14px "Liberation Sans", sans-serif;
    fill: #111;
}
.style-grid {
    display: grid;
    grid-template-columns: 38px 4px 124px 24px 124px;
    grid-template-rows: 30px 30px;
    align-items: center;
    justify-items: center;
    padding-top: 6px;
}
.style-grid .caret {
    margin-left: -6px;
}
.combo {
    display: flex;
    align-items: center;
    width: 100%;
    height: 22px;
    padding: 0 4px;
    border: 1px solid #c6c6c6;
    background-color: #fff;
    color: #111;
    font-size: 12px;
}
.combo::after {
    content: "";
    flex: none;
    width: 6px;
    height: 3px;
    background-color: #666;
    clip-path: polygon(0 0, 100% 0, 50% 100%);
}
.combo select {
    flex: 1;
}
.combo.layer select {
    padding-left: 1px;
}
.combo.color {
    padding-left: 7px;
}
.combo.color select {
    padding-left: 5px;
}
.sample {
    flex: none;
    width: 60px;
    height: 1px;
    margin-right: 3px;
    background-color: #000;
}
.sample.bright {
    width: 70px;
    background-color: #f00;
}
.combo.weight {
    padding-left: 1px;
}

/* side panels */
.workspace {
    display: flex;
    flex: 1;
    min-height: 0;
}
.dock {
    width: 26px;
    padding: 6px 0 0 5px;
}
.dock button {
    flex-direction: column;
    gap: 2px;
    font-size: 13px;
    line-height: 14px;
}
.dock span {
    writing-mode: vertical-rl;
    text-orientation: sideways;
}
.panel {
    display: flex;
    flex-direction: column;
    width: 218px;
    border-right: 1px solid #ccc;
}
.panel-title {
    display: flex;
    align-items: center;
    gap: 10px;
    height: 24px;
    padding: 0 4px 0 3px;
}
.panel-title span {
    flex: 1;
}
.panel-bar {
    display: flex;
    align-items: center;
    gap: 3px;
    padding: 2px 4px 4px 0;
}
.panel-bar .combo {
    flex: 1;
    height: 26px;
    padding-left: 2px;
    border-color: #ddd;
    color: #444;
    font-size: 13px;
}
.panel-bar button {
    width: 25px;
    height: 24px;
    border: 1px solid #adadad;
    background-color: #fff;
}
.props-table {
    table-layout: fixed;
    width: 100%;
    border-collapse: collapse;
    border: 1px solid #c8c8c8;
    background-color: #fff;
    font-family: "Liberation Serif", "Noto Sans CJK SC", serif;
    font-size: 12px;
    line-height: 14px;
}
.props-table .name {
    width: 109px;
}
.props-table th {
    height: 20px;
    padding: 0 3px;
    border: 1px solid #c8c8c8;
    background-color: #f0f0f0;
    font-weight: normal;
    text-align: left;
}
.props-table td {
    height: 16px;
    padding: 0 3px;
    border: 1px solid #c8c8c8;
    line-height: 15px;
}
.props-table td:first-child {
    padding-left: 19px;
}
.props-table .section td {
    padding-left: 7px;
    font-weight: bold;
    color: #111;
}
.props-table .gray td {
    color: #444;
}
.section td::before {
    content: "";
    display: inline-block;
    width: 6px;
    height: 6px;
    margin-right: 6px;
    background-color: #999;
    clip-path: polygon(100% 0, 100% 100%, 0 100%);
}
.black {
    color: #111;
}
.off {
    color: #aaa;
}
.sampled i {
    display: inline-block;
    width: 49px;
    margin: 0 4px 4px 1px;
    border-top: 1px solid #000;
}
.props-table .thin {
    color: #111;
}
.thin i {
    border-color: #ccc;
}
.props-table .swatch {
    padding-left: 2px;
}
.swatch i {
    display: inline-block;
    width: 12px;
    height: 12px;
    margin-right: 1px;
    border: 1px solid #111;
    vertical-align: -2px;
}
.filler {
    flex: 1;
    background: linear-gradient(#c8c8c8, #c8c8c8) 109px 0 / 1px 100% no-repeat #fff;
}
.hint {
    height: 51px;
    margin-top: 4px;
    border: 1px solid #c8c8c8;
    background-color: #f0f0f0;
}

/* drawing area */
.document {
    position: relative;
    display: flex;
    flex: 1;
    flex-direction: column;
    min-width: 0;
    margin-left: 7px;
}
.doc-tabs {
    display: flex;
    align-items: flex-end;
    height: 22px;
    font-size: 12px;
}
.doc-tabs a {
    position: relative;
    z-index: 0;
    height: 20px;
    line-height: 20px;
    white-space: nowrap;
}
.doc-tabs a::before, .doc-tabs a::after {
    content: "";
    position: absolute;
    z-index: -1;
    inset: 0;
    background-color: #999;
    clip-path: polygon(20px 0, 100% 0, 100% 100%, 0 100%);
}
.doc-tabs a::after {
    inset: 1px 1px 0 1px;
    background-color: #f0f0f0;
}
.doc-tabs .plc {
    padding: 0 18px 0 34px;
}
.doc-tabs .sfc {
    padding: 0 12px 0 16px;
}
.doc-tabs .sfc::before, .doc-tabs .sfc::after {
    clip-path: none;
}
.doc-tabs .current {
    display: flex;
    align-items: center;
    gap: 12px;
    margin-left: -16px;
    padding: 0 6px 0 34px;
    font-size: 13px;
    font-weight: bold;
}
.doc-tabs .current::after {
    background-color: #fff;
}
.canvas {
    flex: 1;
    min-height: 0;
    background-color: #000;
}
.drawing {
    shape-rendering: crispEdges;
}
.red {
    fill: none;
    stroke: #f00;
}
.white {
    fill: none;
    stroke: #fff;
}
.corner {
    fill: #f00;
}
.cad-text {
    font: 300 18px Lato, sans-serif;
    fill: #fff;
}
.sheet-tabs {
    display: flex;
    height: 14px;
    font: 12px/14px "Liberation Sans", "Noto Sans CJK SC", sans-serif;
}
.sheet-tabs .model {
    padding: 0 13px;
    background: linear-gradient(67deg, transparent 5px, #888 5px, #fff 6px, #fff calc(100% - 6px), #888 calc(100% - 5px), transparent calc(100% - 5px));
    font-weight: bold;
}
.sheet-tabs .layout {
    padding-left: 4px;
}
.watermark {
    position: absolute;
    right: 15px;
    bottom: 8px;
    color: #8c8c8c;
    font: 18px/24px "Noto Sans", sans-serif;
}
```
